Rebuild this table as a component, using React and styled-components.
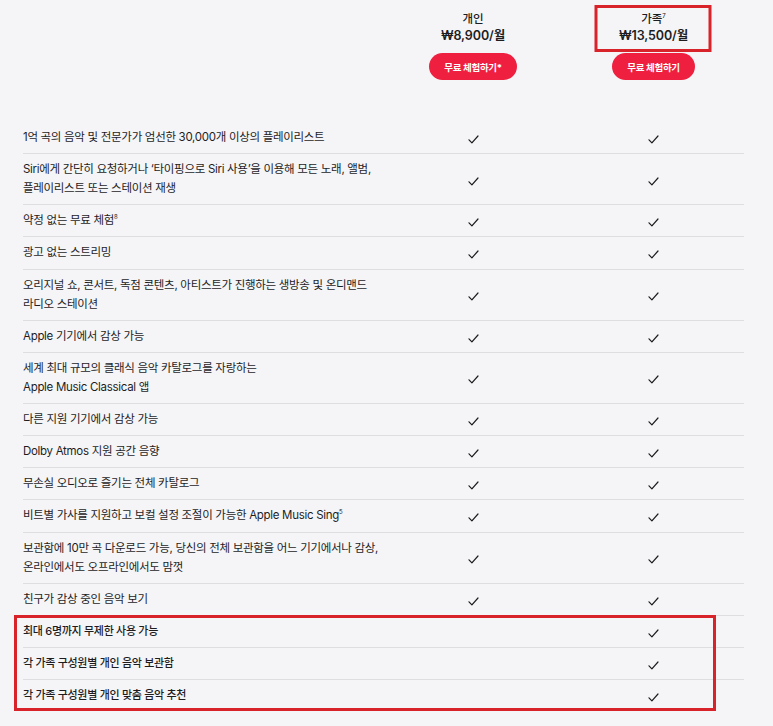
import React from 'react'
import styled, { createGlobalStyle } from 'styled-components'

const GlobalStyle = createGlobalStyle`
  html, body {
    margin: 0;
    background: #f5f5f7;
  }
  body {
    font-family: Inter, 'Noto Sans CJK KR', sans-serif;
    color: #1d1d1f;
  }
`

const Red = '#ee1f3f'
const Mark = '#d8232b'

const Page = styled.div`
  min-height: 726px;
  padding: 0 29px 0 23px;
  background: #f5f5f7;
`

const Grid = styled.div`
  display: grid;
  grid-template-columns: 1fr 180px 181px;
`

const Header = styled(Grid)`
  padding-top: 12px;
  margin-bottom: 42px;
`

const Plan = styled.div`
  display: flex;
  flex-direction: column;
  align-items: center;
`

const PlanInfo = styled.div`
  position: relative;
  display: flex;
  flex-direction: column;
  align-items: center;

  ${({ $marked }) => $marked && `
    &::after {
      content: '';
      position: absolute;
      left: 50%;
      top: -7px;
      width: 117px;
      height: 47px;
      transform: translateX(-50%);
      border: 3px solid ${Mark};
      box-sizing: border-box;
    }
  `}
`

const PlanName = styled.div`
  font-size: 11.5px;
  font-weight: 500;
  line-height: 15px;
`

const Price = styled.div`
  font-size: 12.5px;
  font-weight: 600;
  line-height: 17px;
  letter-spacing: -0.1px;
`

const TrialButton = styled.button`
  margin-top: 9px;
  height: 27px;
  padding: 0 15px;
  border: none;
  border-radius: 14px;
  background: ${Red};
  color: #fff;
  font-family: inherit;
  font-size: 9.5px;
  font-weight: 700;
  letter-spacing: -0.3px;
`

const Sup = styled.sup`
  font-size: 6px;
  line-height: 0;
  vertical-align: 5px;
`

const Row = styled(Grid)`
  align-items: center;
  padding: 6px 0 ${({ $double }) => ($double ? '6px' : '6.2px')};
  border-bottom: ${({ $last }) => ($last ? 'none' : '1px solid #dedee1')};
`

const Feature = styled.div`
  font-size: ${({ $tight }) => ($tight ? '11px' : '11.5px')};
  font-weight: ${({ $tight }) => ($tight ? 500 : 400)};
  line-height: 19px;
  letter-spacing: -0.3px;
`

const Cell = styled.div`
  display: flex;
  justify-content: center;
  padding-top: 4px;

  svg {
    display: block;
  }
`

const Marked = styled.div`
  position: relative;

  &::after {
    content: '';
    position: absolute;
    left: -9px;
    right: 28px;
    top: -1px;
    bottom: 0;
    border: 3px solid ${Mark};
    pointer-events: none;
  }
`

const Check = () => (
  <svg width="11" height="9" viewBox="0 0 11 9">
    <path d="M1 4.8 L3.9 7.9 L10 1" fill="none" stroke="#1d1d1f" strokeWidth="1.2" strokeLinecap="round" strokeLinejoin="round" />
  </svg>
)

const features = [
  { text: '1억 곡의 음악 및 전문가가 엄선한 30,000개 이상의 플레이리스트' },
  { text: ['Siri에게 간단히 요청하거나 ‘타이핑으로 Siri 사용’을 이용해 모든 노래, 앨범,', '플레이리스트 또는 스테이션 재생'] },
  { text: '약정 없는 무료 체험', sup: '8' },
  { text: '광고 없는 스트리밍' },
  { text: ['오리지널 쇼, 콘서트, 독점 콘텐츠, 아티스트가 진행하는 생방송 및 온디맨드', '라디오 스테이션'] },
  { text: 'Apple 기기에서 감상 가능' },
  { text: ['세계 최대 규모의 클래식 음악 카탈로그를 자랑하는', 'Apple Music Classical 앱'] },
  { text: '다른 지원 기기에서 감상 가능' },
  { text: 'Dolby Atmos 지원 공간 음향' },
  { text: '무손실 오디오로 즐기는 전체 카탈로그' },
  { text: '비트별 가사를 지원하고 보컬 설정 조절이 가능한 Apple Music Sing', sup: '5' },
  { text: ['보관함에 10만 곡 다운로드 가능, 당신의 전체 보관함을 어느 기기에서나 감상,', '온라인에서도 오프라인에서도 맘껏'] },
  { text: '친구가 감상 중인 음악 보기' },
]

const familyOnly = [
  '최대 6명까지 무제한 사용 가능',
  '각 가족 구성원별 개인 음악 보관함',
  '각 가족 구성원별 개인 맞춤 음악 추천',
]

const FeatureText = ({ text, sup }) => (
  <>
    {Array.isArray(text) ? text.map((line) => <div key={line}>{line}</div>) : text}
    {sup && <Sup>{sup}</Sup>}
  </>
)

const App = () => (
  <Page>
    <GlobalStyle />
    <Header>
      <div />
      <Plan>
        <PlanInfo>
          <PlanName>개인</PlanName>
          <Price>₩8,900/월</Price>
        </PlanInfo>
        <TrialButton>무료 체험하기*</TrialButton>
      </Plan>
      <Plan>
        <PlanInfo $marked>
          <PlanName>가족<Sup>7</Sup></PlanName>
          <Price>₩13,500/월</Price>
        </PlanInfo>
        <TrialButton>무료 체험하기</TrialButton>
      </Plan>
    </Header>

    {features.map((f, i) => (
      <Row key={i} $double={Array.isArray(f.text)}>
        <Feature>
          <FeatureText text={f.text} sup={f.sup} />
        </Feature>
        <Cell><Check /></Cell>
        <Cell><Check /></Cell>
      </Row>
    ))}

    <Marked>
      {familyOnly.map((t, i) => (
        <Row key={t} $last={i === familyOnly.length - 1}>
          <Feature $tight>{t}</Feature>
          <Cell />
          <Cell><Check /></Cell>
        </Row>
      ))}
    </Marked>
  </Page>
)

export default App
